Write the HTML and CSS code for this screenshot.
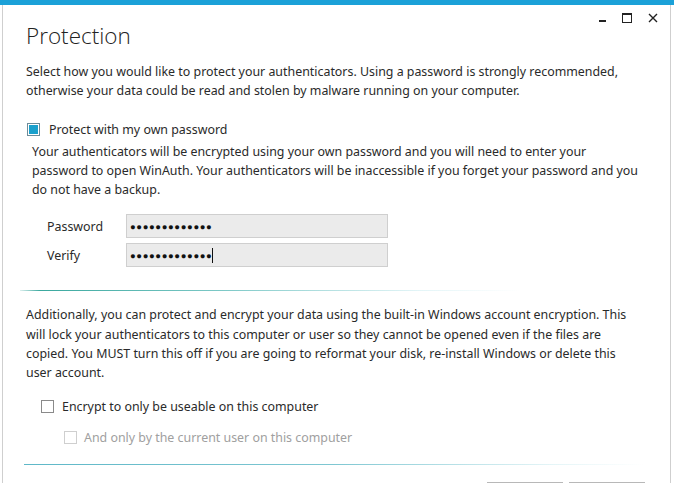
FILE: index.html
```html
<!DOCTYPE html>
<html>
<head>
<meta charset="utf-8">
<link rel="stylesheet" href="styles.css">
</head>
<body>
<div class="topbar"></div>
<div class="window">
  <div class="controls">
    <span class="ctl ctl-min"></span>
    <span class="ctl ctl-max"></span>
    <svg class="ctl-close" width="10" height="10" viewBox="0 0 10 10"><path d="M1 1L9 9M9 1L1 9" stroke="#222" stroke-width="1.4"/></svg>
  </div>
  <h1 class="title">Protection</h1>
  <p class="para intro">Select how you would like to protect your authenticators. Using a password is strongly recommended,<br>otherwise your data could be read and stolen by malware running on your computer.</p>

  <label class="check check-main"><span class="box box-on"><span class="fill"></span></span><span>Protect with my own password</span></label>
  <p class="para sub">Your authenticators will be encrypted using your own password and you will need to enter your<br>password to open WinAuth. Your authenticators will be inaccessible if you forget your password and you<br>do not have a backup.</p>

  <div class="fields">
    <div class="field"><span class="flabel">Password</span><div class="input">●●●●●●●●●●●●●</div></div>
    <div class="field"><span class="flabel">Verify</span><div class="input">●●●●●●●●●●●●●<span class="caret"></span></div></div>
  </div>

  <div class="sep sep1"></div>

  <p class="para extra">Additionally, you can protect and encrypt your data using the built-in Windows account encryption. This<br>will lock your authenticators to this computer or user so they cannot be opened even if the files are<br>copied. You MUST turn this off if you are going to reformat your disk, re-install Windows or delete this<br>user account.</p>

  <label class="check check-machine"><span class="box"></span><span>Encrypt to only be useable on this computer</span></label>
  <label class="check check-user disabled"><span class="box"></span><span>And only by the current user on this computer</span></label>

  <div class="sep sep2"></div>

  <div class="buttons">
    <span class="btn"></span>
    <span class="btn"></span>
  </div>
</div>
</body>
</html>
```

FILE: styles.css
```css
html, body {
  margin: 0;
  padding: 0;
  background: #fff;
  overflow: hidden;
}
body {
  width: 674px;
  height: 483px;
  font-family: "Noto Sans", "Open Sans", sans-serif;
  color: #2a2a2a;
  font-size: 12.4px;
}
.topbar {
  height: 5px;
  background: #1ba1d8;
}
.window {
  position: relative;
  height: 478px;
  margin-left: 2px;
  width: 669px;
  border-left: 1px solid #cfcfcf;
  border-right: 1px solid #cfcfcf;
  box-sizing: border-box;
}
.controls {
  position: absolute;
  top: 6px;
  right: 12px;
  display: flex;
  align-items: center;
  gap: 16px;
  height: 14px;
}
.ctl-min {
  width: 7px;
  height: 2px;
  background: #222;
  margin-top: 6px;
}
.ctl-max {
  width: 8px;
  height: 7px;
  border: 1px solid #222;
  border-top-width: 2px;
}
.ctl-close { display: block; }
.title {
  margin: 0;
  padding: 16px 0 0 23px;
  font-family: "Open Sans", sans-serif;
  font-weight: 300;
  font-size: 22.5px;
  line-height: 30px;
  color: #222;
}
.para {
  margin: 0;
  line-height: 19.3px;
  white-space: nowrap;
}
.intro {
  padding: 11px 0 0 23px;
}
.check {
  display: flex;
  align-items: center;
  gap: 9px;
  line-height: 18px;
}
.box {
  width: 11px;
  height: 11px;
  border: 1px solid #8a8a8a;
  background: #fff;
  display: flex;
  align-items: center;
  justify-content: center;
  flex: none;
}
.box-on { border-color: #6d8c9a; }
.fill {
  width: 9px;
  height: 9px;
  background: #1aa0cc;
}
.check-main {
  margin: 20px 0 0 24px;
}
.sub {
  padding: 3px 0 0 29px;
}
.fields {
  padding: 15px 0 0 44px;
  display: flex;
  flex-direction: column;
  gap: 5px;
}
.field {
  display: flex;
  align-items: center;
}
.flabel {
  width: 79px;
}
.input {
  width: 257px;
  height: 22px;
  background: #ebebeb;
  border: 1px solid #cfcfcf;
  display: flex;
  align-items: center;
  padding-left: 3px;
  font-size: 9.5px;
  letter-spacing: 0.6px;
  color: #111;
  box-sizing: content-box;
}
.caret {
  width: 1px;
  height: 15px;
  background: #111;
  margin-left: 0;
}
.sep {
  height: 1px;
}
.sep1 {
  margin: 23px 0 0 17px;
  width: 500px;
  background: linear-gradient(to right, #dcefee 0, #3aa89e 4%, #7cc8c6 40%, rgba(200,235,240,0.5) 80%, rgba(255,255,255,0) 100%);
}
.extra {
  padding: 14px 0 0 23px;
}
.check-machine {
  margin: 15px 0 0 38px;
  gap: 8px;
}
.check-user {
  margin: 13px 0 0 61px;
  gap: 7px;
}
.disabled { color: #a0a0a0; }
.disabled .box { border-color: #cfcfcf; }
.sep2 {
  margin: 17px 0 0 21px;
  width: 620px;
  background: linear-gradient(to right, #5fb8c8 0, #7fc7d2 50%, rgba(210,238,242,0.6) 85%, rgba(255,255,255,0) 100%);
}
.buttons {
  display: flex;
  gap: 6px;
  margin: 17px 0 0 484px;
}
.btn {
  width: 74px;
  height: 20px;
  border: 1px solid #b8b8b8;
  background: #f4f4f4;
}
```
